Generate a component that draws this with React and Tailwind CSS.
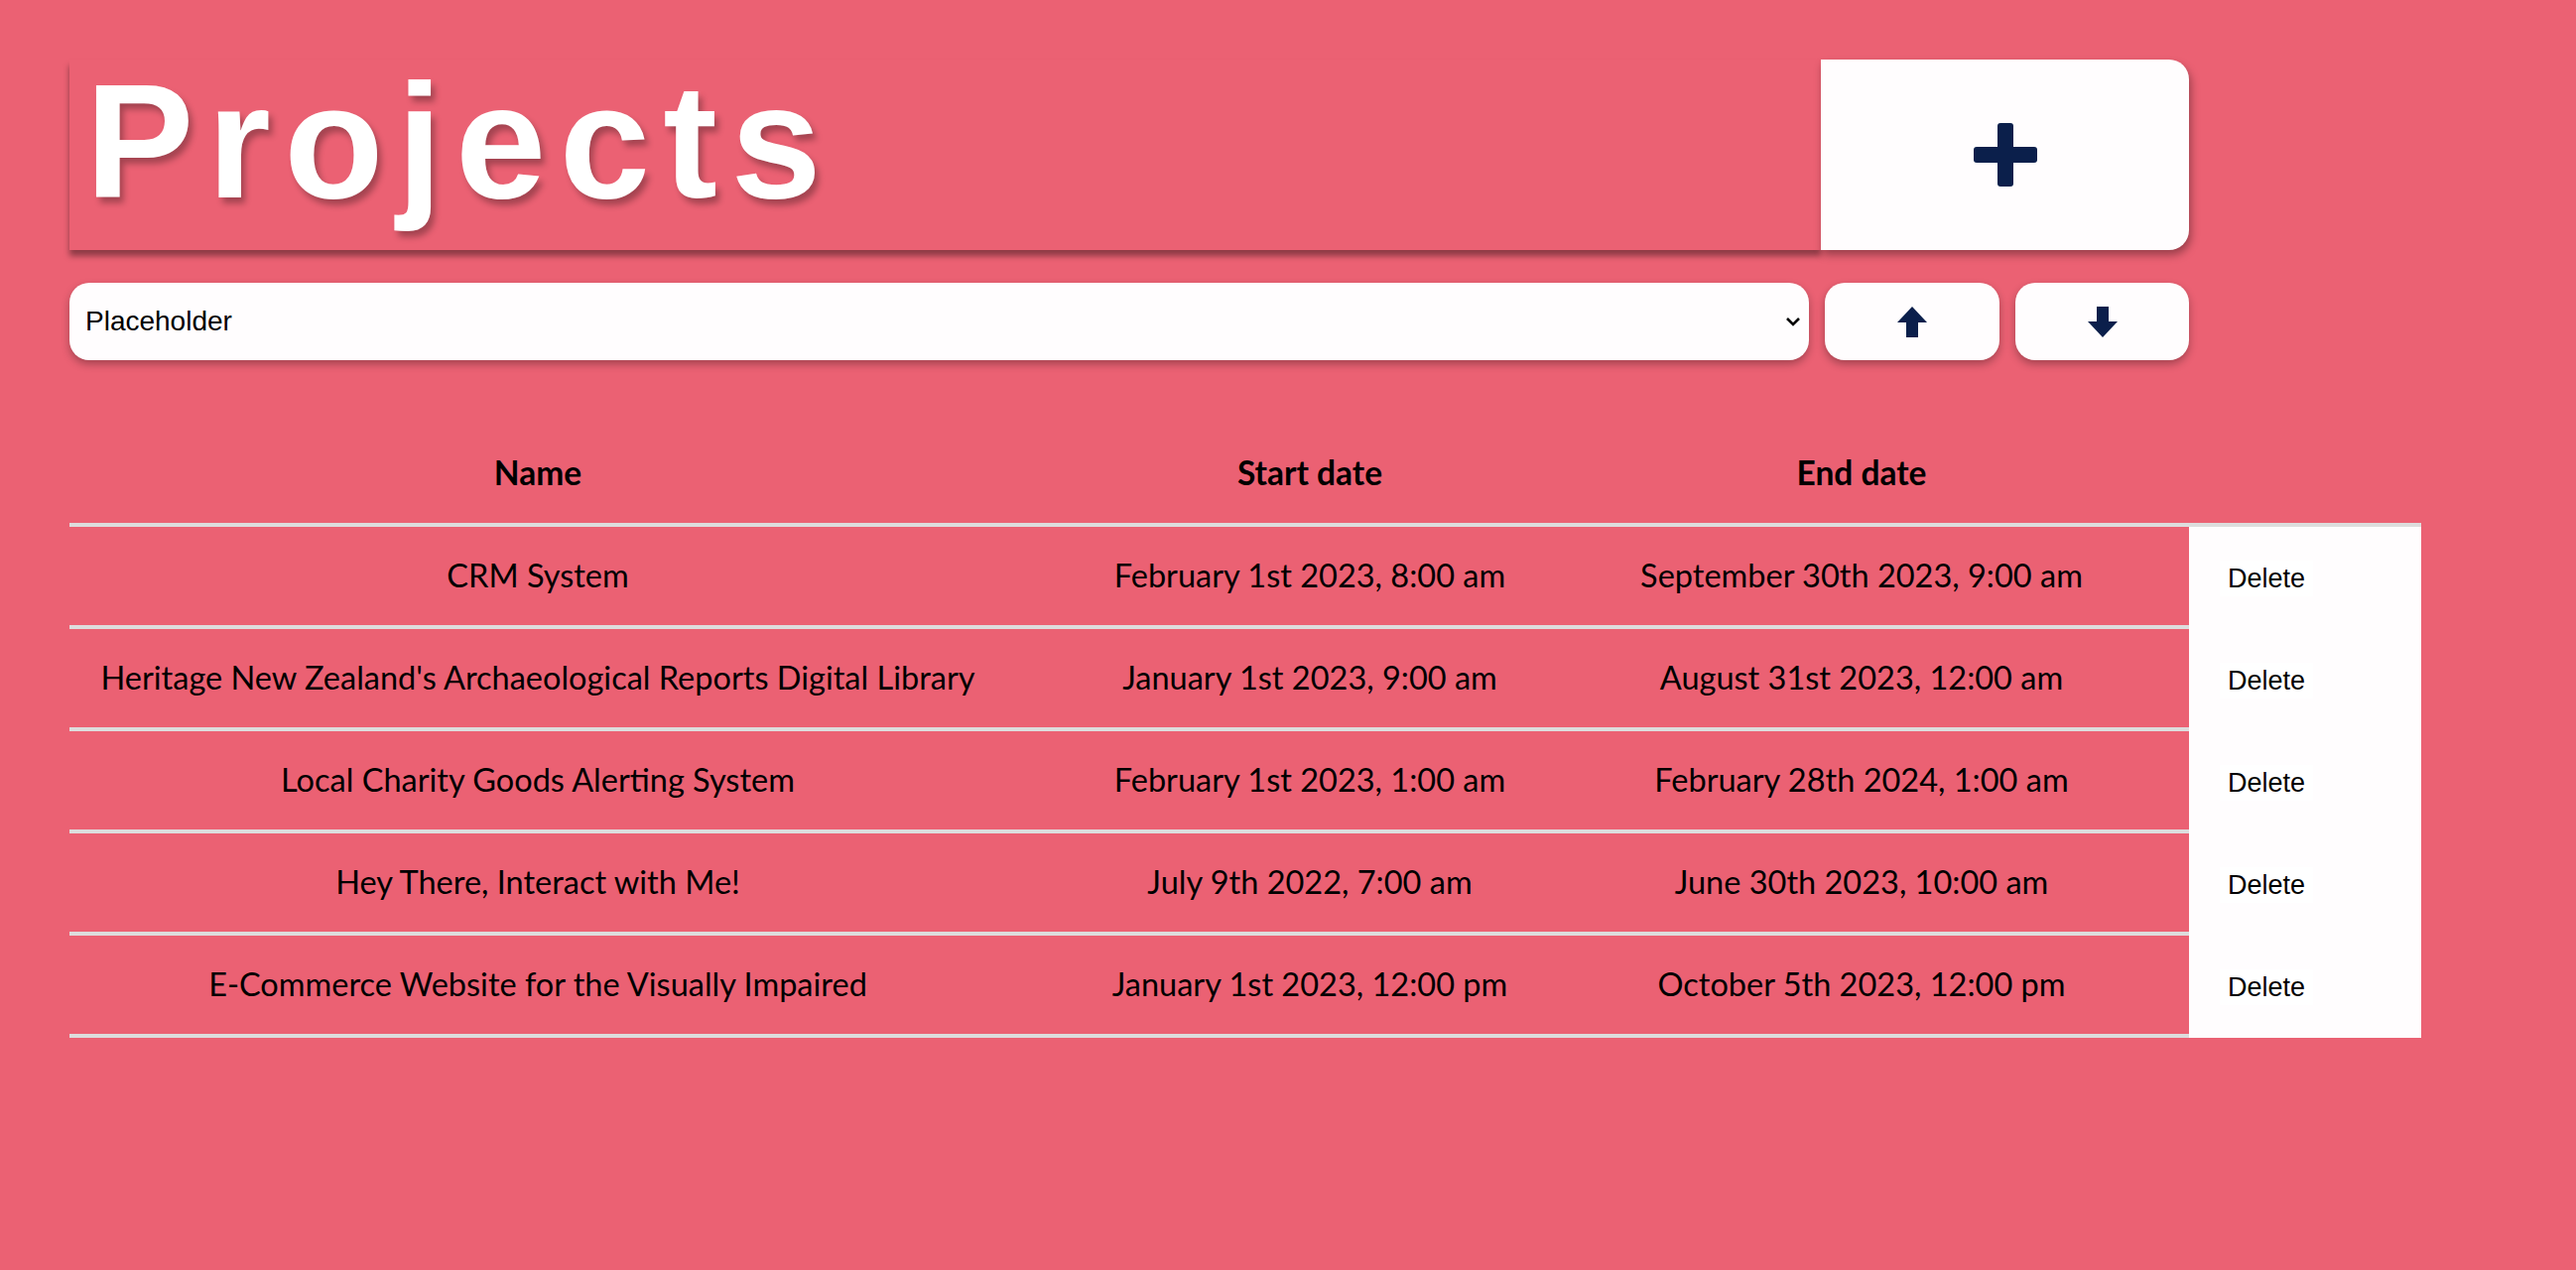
import React from "react";

const rows = [
  ["CRM System", "February 1st 2023, 8:00 am", "September 30th 2023, 9:00 am"],
  ["Heritage New Zealand's Archaeological Reports Digital Library", "January 1st 2023, 9:00 am", "August 31st 2023, 12:00 am"],
  ["Local Charity Goods Alerting System", "February 1st 2023, 1:00 am", "February 28th 2024, 1:00 am"],
  ["Hey There, Interact with Me!", "July 9th 2022, 7:00 am", "June 30th 2023, 10:00 am"],
  ["E-Commerce Website for the Visually Impaired", "January 1st 2023, 12:00 pm", "October 5th 2023, 12:00 pm"],
];

function PlusIcon() {
  return (
    <svg width="64" height="64" viewBox="0 0 64 64">
      <rect x="0" y="24" width="64" height="16" rx="3" fill="#0B1F4B" />
      <rect x="24" y="0" width="16" height="64" rx="3" fill="#0B1F4B" />
    </svg>
  );
}

function ArrowUp() {
  return (
    <svg width="30" height="31" viewBox="0 0 30 31">
      <polygon points="15,0 30,16 21,16 21,31 9,31 9,16 0,16" fill="#0B1F4B" />
    </svg>
  );
}

function ArrowDown() {
  return (
    <svg width="30" height="31" viewBox="0 0 30 31">
      <polygon points="9,0 21,0 21,15 30,15 15,31 0,15 9,15" fill="#0B1F4B" />
    </svg>
  );
}

export default function App() {
  return (
    <div className="w-full min-h-[1280px] bg-[#EB6173] pl-[70px] pt-[60px] font-['Liberation_Sans',Arial,sans-serif]">
      <div className="w-[2136px]">
        <div className="flex h-[192px]">
          <div className="flex-1 shadow-[0_6px_6px_rgba(0,0,0,0.4)] pl-[16px]">
            <h1 className="text-white font-bold text-[164px] leading-[164px] mt-[1px] tracking-[13.5px] [text-shadow:4px_6px_6px_rgba(0,0,0,0.3)]">
              Projects
            </h1>
          </div>
          <button className="w-[371px] bg-[#FFFDFE] rounded-r-[20px] flex items-center justify-center shadow-[2px_5px_8px_rgba(0,0,0,0.35)]">
            <PlusIcon />
          </button>
        </div>

        <div className="flex gap-[16px] mt-[33px] h-[78px]">
          <div className="flex-1 bg-[#FFFDFE] rounded-[20px] flex items-center justify-between pl-[16px] pr-[8px] shadow-[0_4px_8px_rgba(0,0,0,0.3)]">
            <span className="text-[28px] text-black">Placeholder</span>
            <svg width="16" height="11" viewBox="0 0 16 11">
              <polyline points="2,2 8,8 14,2" fill="none" stroke="#000" strokeWidth="2.6" />
            </svg>
          </div>
          <button className="w-[176px] bg-[#FFFDFE] rounded-[20px] flex items-center justify-center shadow-[0_4px_8px_rgba(0,0,0,0.3)]">
            <ArrowUp />
          </button>
          <button className="w-[175px] bg-[#FFFDFE] rounded-[20px] flex items-center justify-center shadow-[0_4px_8px_rgba(0,0,0,0.3)]">
            <ArrowDown />
          </button>
        </div>
      </div>

      <div className="mt-[65px] w-[2370px] font-['Lato',sans-serif] text-[32.5px] text-black">
        <div className="flex font-bold text-[33.5px]">
          <div className="w-[944px] h-[103px] border-b-4 border-[#DDDDDD] flex items-center justify-center pb-[2px]">Name</div>
          <div className="w-[612px] h-[103px] border-b-4 border-[#DDDDDD] flex items-center justify-center pb-[2px]">Start date</div>
          <div className="w-[580px] h-[103px] border-b-4 border-[#DDDDDD] flex items-center justify-center pr-[80px] pb-[2px]">End date</div>
          <div className="w-[234px] h-[103px] border-b-4 border-[#DDDDDD]"></div>
        </div>
        {rows.map((r, i) => (
          <div key={i} className="flex">
            <div className="w-[944px] h-[103px] border-b-4 border-[#DDDDDD] flex items-center justify-center">{r[0]}</div>
            <div className="w-[612px] h-[103px] border-b-4 border-[#DDDDDD] flex items-center justify-center">{r[1]}</div>
            <div className="w-[580px] h-[103px] border-b-4 border-[#DDDDDD] flex items-center justify-center pr-[80px]">{r[2]}</div>
            <div className="w-[234px] h-[103px] bg-[#FFFDFE] flex items-center pl-[31px]">
              <button className="h-[36px] px-[8px] bg-white text-[27px] text-black font-['Liberation_Sans',Arial,sans-serif] leading-[36px]">
                Delete
              </button>
            </div>
          </div>
        ))}
      </div>
    </div>
  );
}
